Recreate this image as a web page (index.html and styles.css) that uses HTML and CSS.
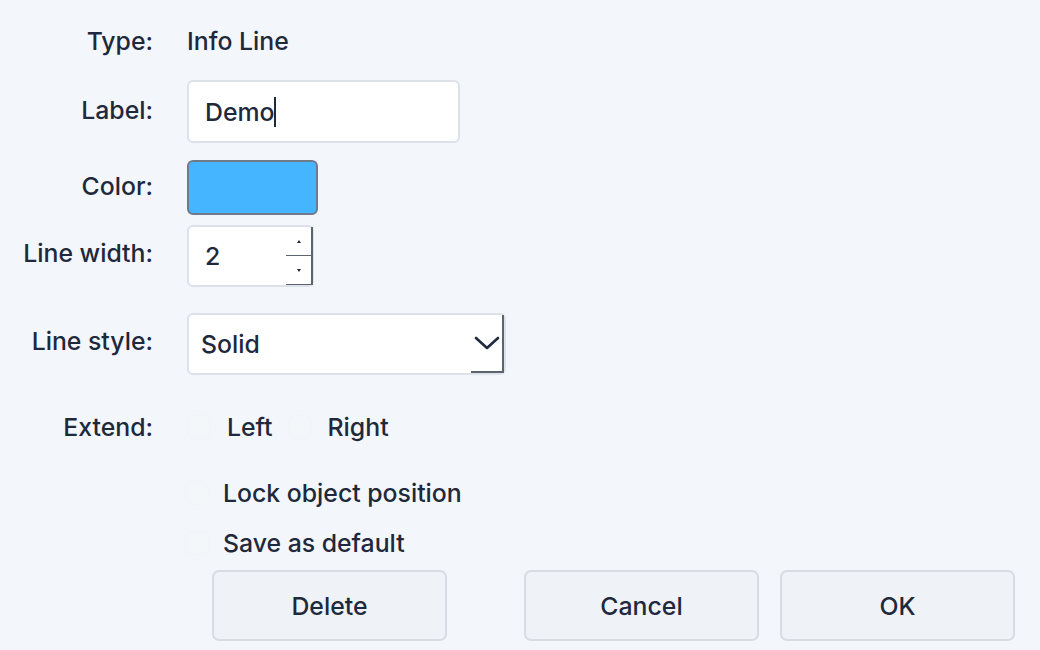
FILE: index.html
```html
<!DOCTYPE html>
<html lang="en">
<head>
<meta charset="utf-8">
<title>Info Line</title>
<link rel="stylesheet" href="styles.css">
</head>
<body>
<div class="dialog">
  <div class="row row-type">
    <div class="label">Type:</div>
    <div class="value">Info Line</div>
  </div>
  <div class="row row-label">
    <div class="label">Label:</div>
    <div class="field text-input"><span>Demo</span><span class="caret"></span></div>
  </div>
  <div class="row row-color">
    <div class="label">Color:</div>
    <div class="swatch"></div>
  </div>
  <div class="row row-width">
    <div class="label">Line width:</div>
    <div class="field spin-input">
      <span class="spin-value">2</span>
      <div class="spinner">
        <div class="spin-btn up"><span class="tri-up"></span></div>
        <div class="spin-btn down"><span class="tri-down"></span></div>
      </div>
    </div>
  </div>
  <div class="row row-style">
    <div class="label">Line style:</div>
    <div class="field select">
      <span>Solid</span>
      <div class="select-arrow">
        <svg width="26" height="16" viewBox="0 0 26 16"><path d="M2 3 L13 13 L24 3" fill="none" stroke="#1e293b" stroke-width="2.6" stroke-linecap="round" stroke-linejoin="round"/></svg>
      </div>
    </div>
  </div>
  <div class="row row-extend">
    <div class="label">Extend:</div>
    <div class="checks">
      <label class="check"><span class="box"></span><span>Left</span></label>
      <label class="check"><span class="box"></span><span>Right</span></label>
    </div>
  </div>
  <div class="row row-lock">
    <div class="label"></div>
    <label class="check wide"><span class="box"></span><span>Lock object position</span></label>
  </div>
  <div class="row row-save">
    <div class="label"></div>
    <label class="check wide"><span class="box"></span><span>Save as default</span></label>
  </div>
  <div class="buttons">
    <button class="btn">Delete</button>
    <div class="spacer"></div>
    <button class="btn">Cancel</button>
    <button class="btn">OK</button>
  </div>
</div>
</body>
</html>
```

FILE: styles.css
```css
html, body {
  margin: 0;
  padding: 0;
  background: #f3f6fa;
}
body {
  width: 1040px;
  height: 650px;
  overflow: hidden;
  font-family: Inter, "Noto Sans", sans-serif;
  font-size: 24.8px;
  font-weight: 500;
  color: #1e293b;
}
.dialog {
  display: flex;
  flex-direction: column;
}
.row {
  display: grid;
  grid-template-columns: 153px 1fr;
  column-gap: 34px;
  align-items: center;
}
.label {
  text-align: right;
}
.row-type { height: 80px; }
.row-type .label, .row-type .value { margin-top: 1px; }
.row-label { height: 63px; }
.row-label .label { margin-top: -4px; }
.row-color { height: 55px; margin-top: 17px; }
.row-color .label { margin-top: -3px; }
.row-width { height: 62px; margin-top: 10px; }
.row-width .label { margin-top: -6px; }
.row-style { height: 62px; margin-top: 26px; }
.row-style .label { margin-top: -6px; }
.row-extend { height: 54px; margin-top: 25px; }
.row-lock { height: 50px; margin-top: 14px; }
.row-save { height: 50px; }
.field {
  box-sizing: border-box;
  background: #ffffff;
  border: 2px solid #dde2ea;
  border-radius: 6px;
  height: 100%;
  display: flex;
  align-items: center;
}
.text-input {
  width: 273px;
  padding-left: 16px;
}
.caret {
  display: inline-block;
  width: 2px;
  height: 30px;
  background: #1e293b;
  margin-left: 0;
}
.swatch {
  box-sizing: border-box;
  width: 131px;
  height: 55px;
  background: #45b5ff;
  border: 2px solid #6f7b8b;
  border-radius: 6px;
}
.spin-input {
  width: 127px;
  padding-left: 16px;
  position: relative;
}
.spin-value { flex: 1; }
.spinner {
  display: flex;
  flex-direction: column;
  width: 27px;
  height: 58px;
  margin-right: -1px;
  border-right: 2px solid #5c6470;
  box-sizing: border-box;
}
.spin-btn {
  flex: 1;
  display: flex;
  align-items: center;
  justify-content: center;
  border-bottom: 1.5px solid #5c6470;
}
.tri-up, .tri-down {
  width: 0;
  height: 0;
  border-left: 2.5px solid transparent;
  border-right: 2.5px solid transparent;
}
.tri-up { border-bottom: 3px solid #1e293b; }
.tri-down { border-top: 3px solid #1e293b; }
.select {
  width: 319px;
  padding-left: 12px;
  justify-content: space-between;
}
.select-arrow {
  box-sizing: border-box;
  width: 33px;
  height: 58px;
  margin-right: 0;
  border-right: 2px solid #5c6470;
  border-bottom: 2px solid #5c6470;
  display: flex;
  align-items: center;
  justify-content: center;
}
.checks {
  display: flex;
  align-items: center;
}
.check {
  display: flex;
  align-items: center;
}
.box {
  display: inline-block;
  box-sizing: border-box;
  width: 24px;
  height: 24px;
  border-radius: 8px;
  background: #f4f7fa;
  border: 1px solid #f1f4f8;
  margin-right: 16px;
}
.checks .check:first-child { margin-right: 15px; }
.checks .check:last-child .box { margin-right: 16px; }
.wide .box { margin-left: -2px; margin-right: 14px; }
.buttons {
  display: flex;
  margin-top: 2px;
  padding-left: 212px;
  padding-right: 25px;
  column-gap: 21px;
}
.spacer { flex: 1; }
.btn {
  box-sizing: border-box;
  width: 235px;
  height: 71px;
  background: #eff2f7;
  border: 2px solid #d6dce4;
  border-radius: 7px;
  font-family: Inter, "Noto Sans", sans-serif;
  font-size: 24.8px;
  font-weight: 500;
  color: #1e293b;
  padding: 0;
}
```
